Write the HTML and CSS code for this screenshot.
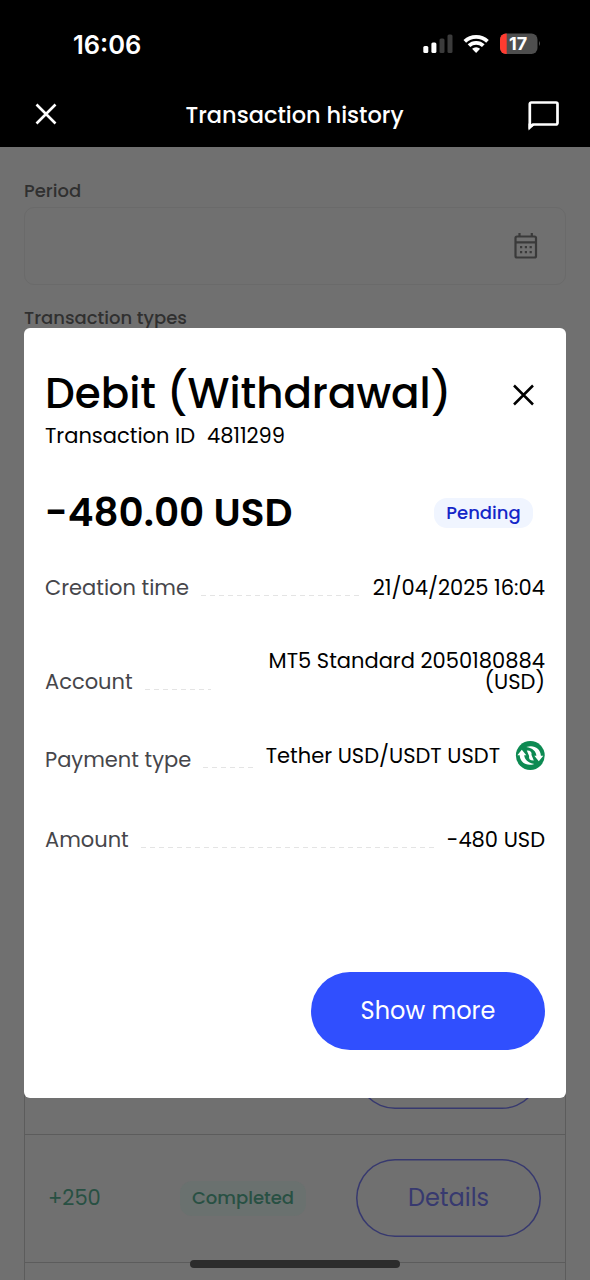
FILE: index.html
```html
<!DOCTYPE html>
<html lang="en">
<head>
<meta charset="utf-8">
<title>Transaction history</title>
<link rel="stylesheet" href="styles.css">
</head>
<body>
<div class="screen">
  <header class="top">
    <div class="status">
      <span class="clock">16:06</span>
      <svg class="status-icons" width="120" height="24" viewBox="420 32 120 24">
        <g fill="#fff"><rect x="423.3" y="46" width="5" height="7" rx="1.5"/><rect x="431.4" y="42.5" width="5" height="10.5" rx="1.5"/></g>
        <g fill="#3b3b3b"><rect x="439.5" y="38.5" width="5" height="14.5" rx="1.5"/><rect x="447.5" y="34.5" width="5" height="18.5" rx="1.5"/></g>
        <g fill="none" stroke="#fff" stroke-width="3.8"><path d="M464.800 41.300a16.500 16.500 0 0 1 22.700 0"/><path d="M469 45.700a10.300 10.300 0 0 1 14.300 0"/></g>
        <path d="M476.100 53l-4-4.200a5.800 5.800 0 0 1 8 0z" fill="#fff"/>
        <clipPath id="cell"><rect x="500" y="33.5" width="37.5" height="20.5" rx="6"/></clipPath>
        <g clip-path="url(#cell)"><rect x="500" y="33" width="38" height="22" fill="#4e4e4e"/><rect x="500" y="33" width="6.7" height="22" fill="#ff3b30"/></g>
        <path d="M539 41q2 2.500 0 5z" fill="#4e4e4e"/>
        <text class="charge" x="518" y="50">17</text>
      </svg>
    </div>
    <nav class="bar">
      <svg class="leave" width="22" height="22" viewBox="0 0 22 22"><path d="M1.500 1.500l19 19M20.500 1.500l-19 19" stroke="#fff" stroke-width="2.600"/></svg>
      <h1 class="bar-title">Transaction history</h1>
      <svg width="32" height="32" viewBox="0.500 -0.500 32 32"><path d="M2.300 27V4.500a1.500 1.500 0 0 1 1.500-1.500H28.500a1.500 1.500 0 0 1 1.500 1.500V23.500a1.500 1.500 0 0 1-1.500 1.500H5.500z" fill="none" stroke="#fff" stroke-width="2.700"/><path d="M1 24v7l6.500-6z" fill="#fff"/></svg>
    </nav>
  </header>
  <main class="page">
    <label class="label">Period</label>
    <div class="field">
      <svg width="24" height="27" viewBox="0 0 24 27"><g fill="none" stroke="#3a3a3a" stroke-width="2.200"><rect x="1.500" y="4.500" width="20.500" height="21" rx="1.500"/><path d="M1.500 10.300H22M5.500 1v4M17.800 1v4"/></g><path d="M6 15.200h2.200M10.800 15.200h2.200M15.600 15.200h2.200M6 20.200h2.200M10.800 20.200h2.200M15.600 20.200h2.200" stroke="#3a3a3a" stroke-width="2.200"/></svg>
    </div>
    <label class="label types">Transaction types</label>
    <section class="table">
      <div class="entry"><div class="outline"></div></div>
      <div class="entry">
        <span class="credit">+250</span>
        <span class="done">Completed</span>
        <div class="outline">Details</div>
      </div>
      <div class="entry"></div>
    </section>
  </main>
  <section class="modal">
    <div class="modal-head">
      <h2 class="title">Debit (Withdrawal)</h2>
      <svg class="close" width="22" height="22" viewBox="-0.500 0 22 22"><path d="M1.500 1.500l19 19M20.500 1.500l-19 19" stroke="#000" stroke-width="2.500"/></svg>
    </div>
    <div class="ident"><span>Transaction ID</span><span class="ident-no">4811299</span></div>
    <div class="sum"><strong class="total">-480.00 USD</strong><span class="pending">Pending</span></div>
    <div class="row created"><span class="key">Creation time</span><i class="dots"></i><span class="value">21/04/2025 16:04</span></div>
    <div class="row account"><span class="key">Account</span><i class="dots"></i><span class="value two">MT5 Standard 2050180884 (USD)</span></div>
    <div class="row payment"><span class="key">Payment type</span><i class="dots"></i><span class="value pay"><span>Tether USD/USDT USDT</span>
      <svg width="30" height="30" viewBox="-0.300 -0.500 30 30"><circle cx="15" cy="15" r="14.400" fill="#0d8a52"/><g id="turn" fill="#fff"><path d="M2 14.800L6.500 9.200 11 14.800H8.900C9.300 19 12.500 22.300 19 23.400 12 26 4.800 22.500 4.400 14.800z"/></g><use href="#turn" transform="rotate(180 15 15)"/><path d="M11.500 10Q17 9.800 16.200 14.600L18.500 20Q13 20.200 13.800 15.400z" fill="#fff"/></svg></span></div>
    <div class="row amount"><span class="key">Amount</span><i class="dots"></i><span class="value">-480 USD</span></div>
    <button class="more">Show more</button>
  </section>
  <div class="home"></div>
</div>
</body>
</html>
```
FILE: styles.css
```css
* { box-sizing: border-box; }
body { margin: 0; font-family: Poppins, Inter, sans-serif; }
h1, h2 { margin: 0; }
svg { display: block; flex: none; }
.screen { position: relative; width: 590px; height: 1280px; overflow: hidden; background: #707070; }
.top { height: 147px; background: #000; color: #fff; }
.status { height: 82px; padding: 32px 50px 0 73px; display: flex; justify-content: space-between; align-items: flex-start; }
.clock { font: 600 25.5px/25px Inter, sans-serif; }
.charge { font: 700 18px Inter, sans-serif; fill: #fff; text-anchor: middle; }
.bar { height: 65px; padding: 0 30px 0 35px; display: flex; justify-content: space-between; align-items: center; }
.leave { margin-bottom: 2px; }
.bar-title { font-size: 22.5px; line-height: 30px; font-weight: 500; margin-left: 4px; }
.page { padding: 33px 24px 0; }
.label { display: block; height: 27px; font-size: 18px; line-height: 22px; font-weight: 500; color: #303030; }
.field { height: 78px; border: 1px solid #6a6a6a; border-radius: 10px; display: flex; align-items: center; justify-content: flex-end; padding: 0 27px 2px 0; }
.types { margin-top: 21px; line-height: 23px; }
.table { border: 1px solid #5c5c5c; border-bottom: 0; margin-top: 673px; }
.entry { height: 128px; border-bottom: 1px solid #5c5c5c; display: flex; align-items: center; padding: 0 24px 1px; }
.credit { width: 132px; margin-left: -1px; padding-bottom: 1px; font-size: 21px; color: #285043; }
.done { width: 126px; height: 35px; border-radius: 12px; background: #6a716f; text-align: center; line-height: 34px; font-size: 18px; font-weight: 500; color: #285043; }
.outline { width: 185px; height: 78px; box-shadow: inset 0 0 0 1.5px #37396f; border-radius: 39px; margin-left: auto; padding-bottom: 1px; display: grid; place-items: center; font-size: 24px; color: #37396f; }
.modal { position: absolute; left: 24px; top: 328px; width: 542px; height: 770px; border-radius: 6px; background: #fff; padding: 42px 21px 0; display: flex; flex-direction: column; color: #000; }
.modal-head { height: 54px; display: flex; justify-content: space-between; }
.title { font-size: 42px; line-height: 48px; font-weight: 500; white-space: nowrap; }
.close { margin: 14px 11px 0 0; }
.ident { height: 63px; font-size: 21px; line-height: 24px; display: flex; gap: 12px; }
.ident-no { letter-spacing: -0.1px; }
.sum { height: 48px; display: flex; justify-content: space-between; }
.total { font-size: 39px; line-height: 51px; font-weight: 600; }
.pending { width: 99px; height: 30px; margin: 11px 12px 0 0; border-radius: 13px; background: #f0f5ff; text-align: center; font-size: 18px; line-height: 30px; font-weight: 500; color: #1426c8; }
.row { display: flex; align-items: flex-end; font-size: 21px; line-height: 21px; height: 63px; }
.account { height: 94px; }
.payment { height: 78px; }
.amount { height: 80px; }
.key { color: #46464b; }
.dots { flex: 1; height: 1px; margin: 0 12px 2px; background: repeating-linear-gradient(90deg, #e4e4e4 0 5px, transparent 5px 9px); }
.two { width: 322px; padding-left: 40px; text-align: right; }
.pay { display: flex; gap: 15px; align-items: center; }
.more { margin: 121.5px 0 0 auto; width: 234px; height: 78px; flex: none; border: 0; padding: 0 0 1px; border-radius: 39px; background: #304ffe; color: #fff; font: 24px Poppins, Inter, sans-serif; }
.home { position: absolute; left: 190px; top: 1260px; width: 210px; height: 8px; border-radius: 4px; background: #2c2c2c; }
```
